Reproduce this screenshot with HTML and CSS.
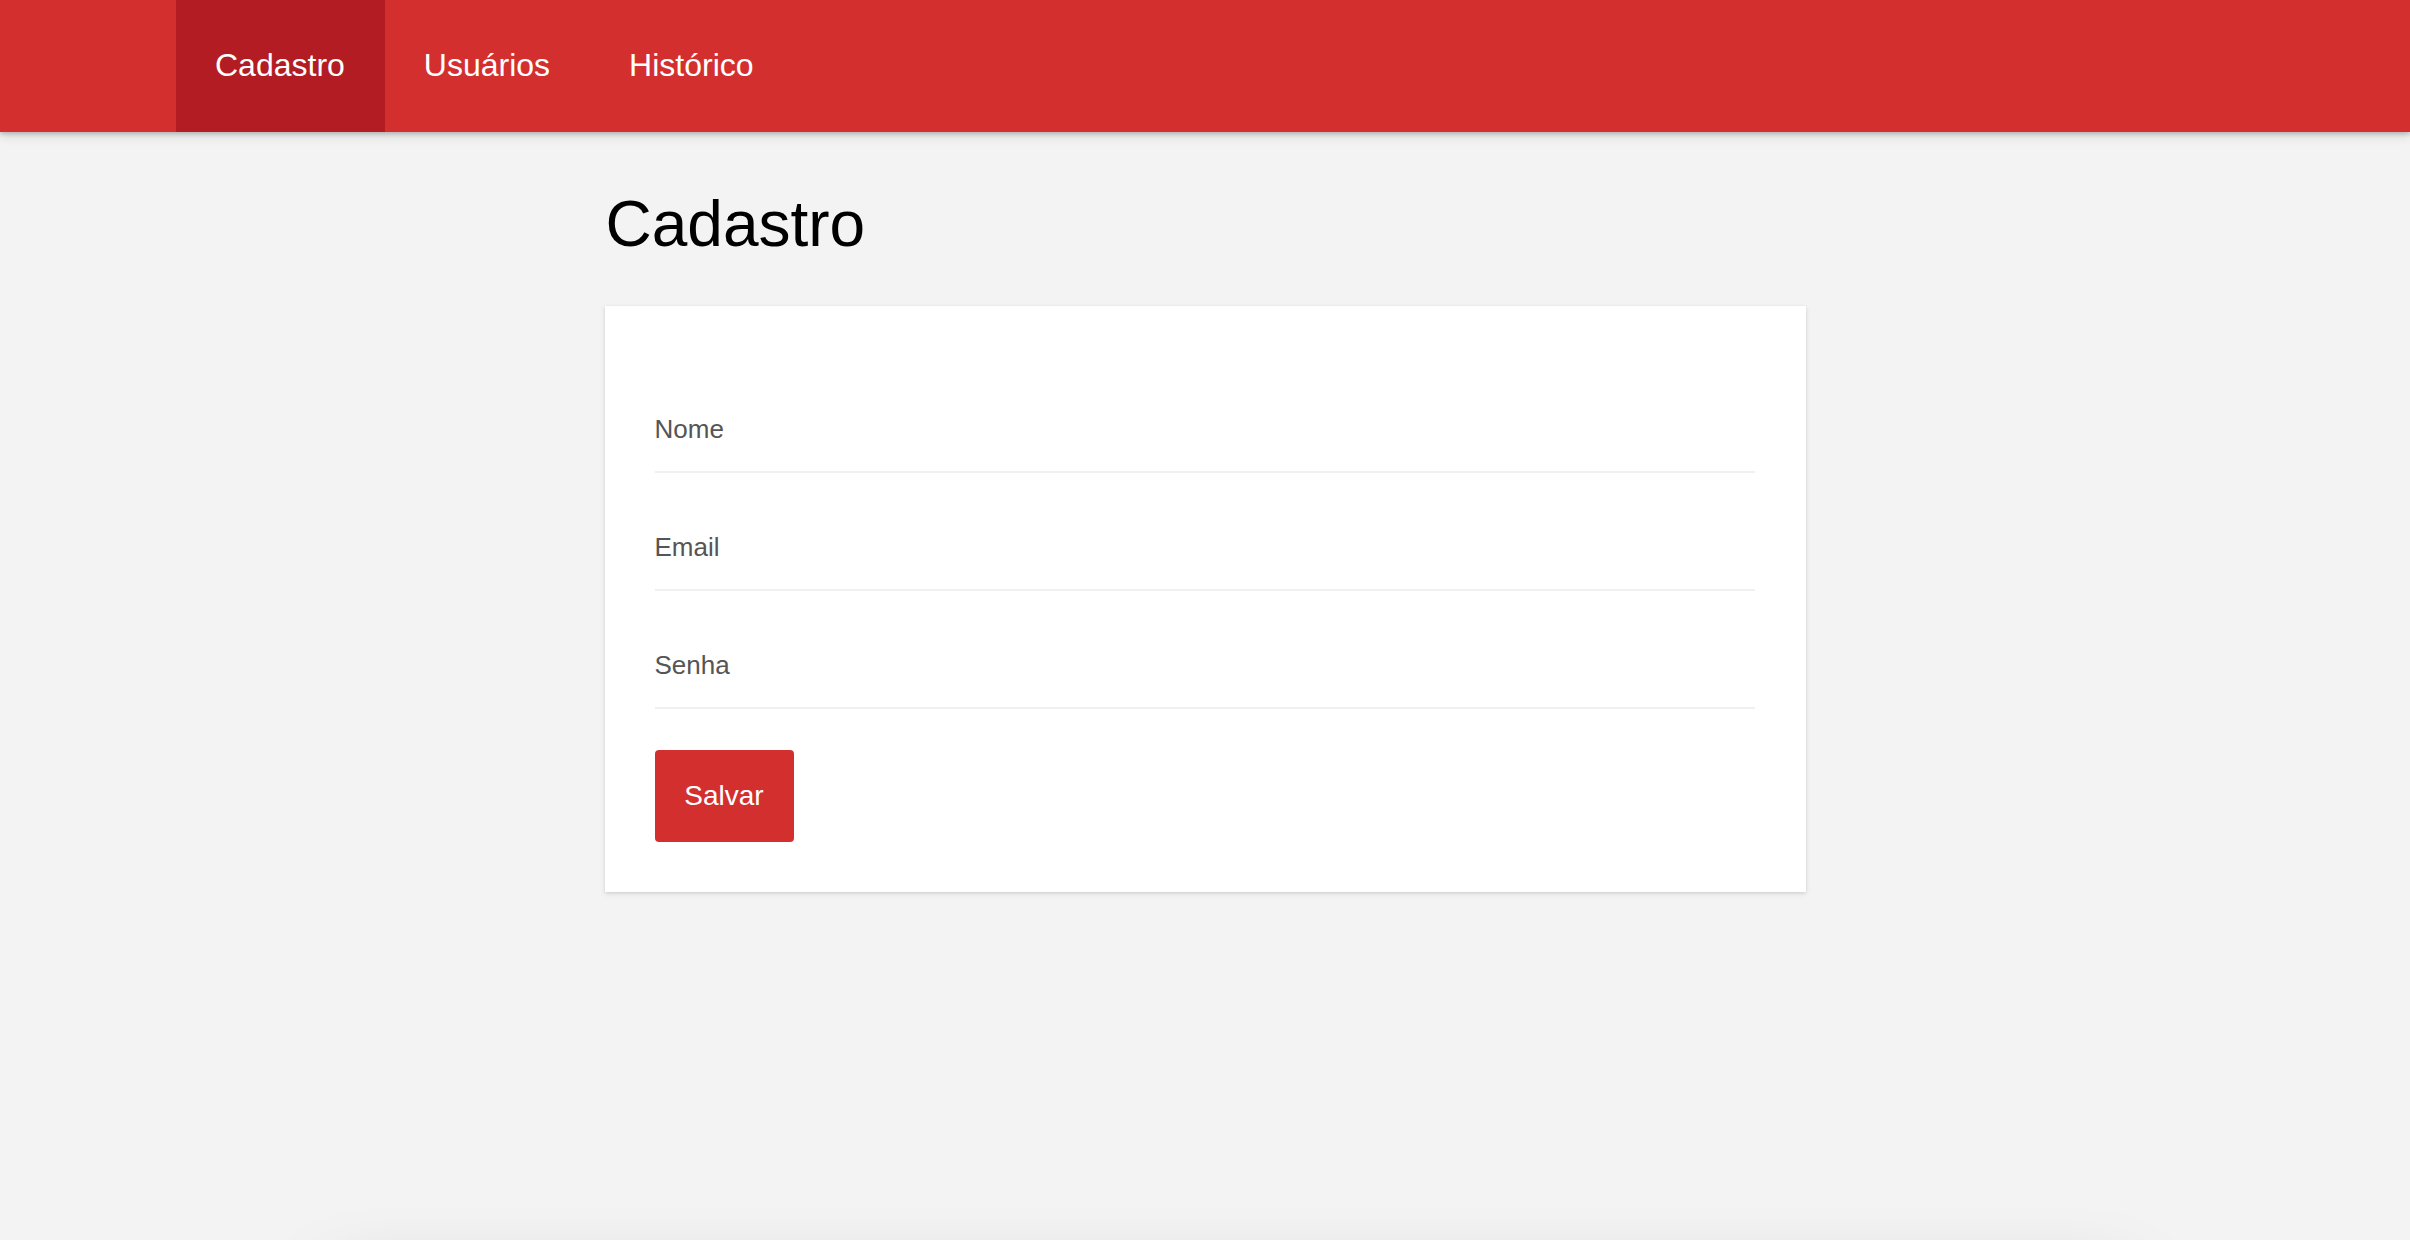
FILE: index.html
```html
<!DOCTYPE html>
<html lang="pt-BR">
<head>
<meta charset="utf-8">
<title>Cadastro</title>
<link rel="stylesheet" href="styles.css">
</head>
<body>
<nav class="navbar">
  <ul class="nav-list">
    <li><a class="nav-link active" href="#">Cadastro</a></li>
    <li><a class="nav-link" href="#">Usuários</a></li>
    <li><a class="nav-link" href="#">Histórico</a></li>
  </ul>
</nav>
<main class="page">
  <div class="container">
    <h1 class="title">Cadastro</h1>
    <form class="card">
      <div class="field"><label class="field-label">Nome</label></div>
      <div class="field"><label class="field-label">Email</label></div>
      <div class="field"><label class="field-label">Senha</label></div>
      <button class="btn" type="button">Salvar</button>
    </form>
  </div>
</main>
<footer class="footer"></footer>
</body>
</html>
```
FILE: styles.css
```css
* { box-sizing: border-box; }
html, body { margin: 0; padding: 0; }
body {
  background: #f3f3f3;
  font-family: "Liberation Sans", Arial, Helvetica, sans-serif;
  color: #000;
  overflow: hidden;
}
.navbar {
  position: relative;
  z-index: 2;
  height: 132px;
  background: #d32f2f;
  box-shadow: 0 2px 4px rgba(0,0,0,0.18), 0 4px 10px rgba(0,0,0,0.12);
  padding-left: 176px;
}
.nav-list {
  list-style: none;
  margin: 0;
  padding: 0;
  display: flex;
  height: 100%;
}
.nav-link {
  display: block;
  height: 132px;
  line-height: 131px;
  padding: 0 40px 0 39px;
  color: #fff;
  font-size: 32px;
  text-decoration: none;
}
.nav-link.active { background: #b21c22; }
.page {
  min-height: calc(100vh - 132px);
}
.container {
  width: 1201px;
  margin: 0 auto;
}
.title {
  margin: 55px 0 45px;
  font-size: 64px;
  line-height: 74px;
  font-weight: 400;
  padding-left: 1px;
}
.card {
  display: block;
  background: #fff;
  padding: 49px 51px 50px 50px;
  box-shadow: 0 1px 3px rgba(0,0,0,0.10), 0 2px 6px rgba(0,0,0,0.07);
}
.field {
  padding: 59px 0 27px;
  border-bottom: 2px solid #f0f0f0;
}
.field-label {
  display: block;
  font-size: 26px;
  line-height: 30px;
  color: #555;
}
.btn {
  display: block;
  margin-top: 41px;
  width: 139px;
  height: 92px;
  padding: 0;
  border: 0;
  border-radius: 4px;
  background: #d32f2f;
  color: #fff;
  font-family: "Liberation Sans", Arial, Helvetica, sans-serif;
  font-size: 28px;
  line-height: 92px;
}
.footer {
  width: 1780px;
  height: 200px;
  margin-left: 340px;
  background: #f3f3f3;
  box-shadow: 0 0 80px rgba(0,0,0,0.34);
}
```
